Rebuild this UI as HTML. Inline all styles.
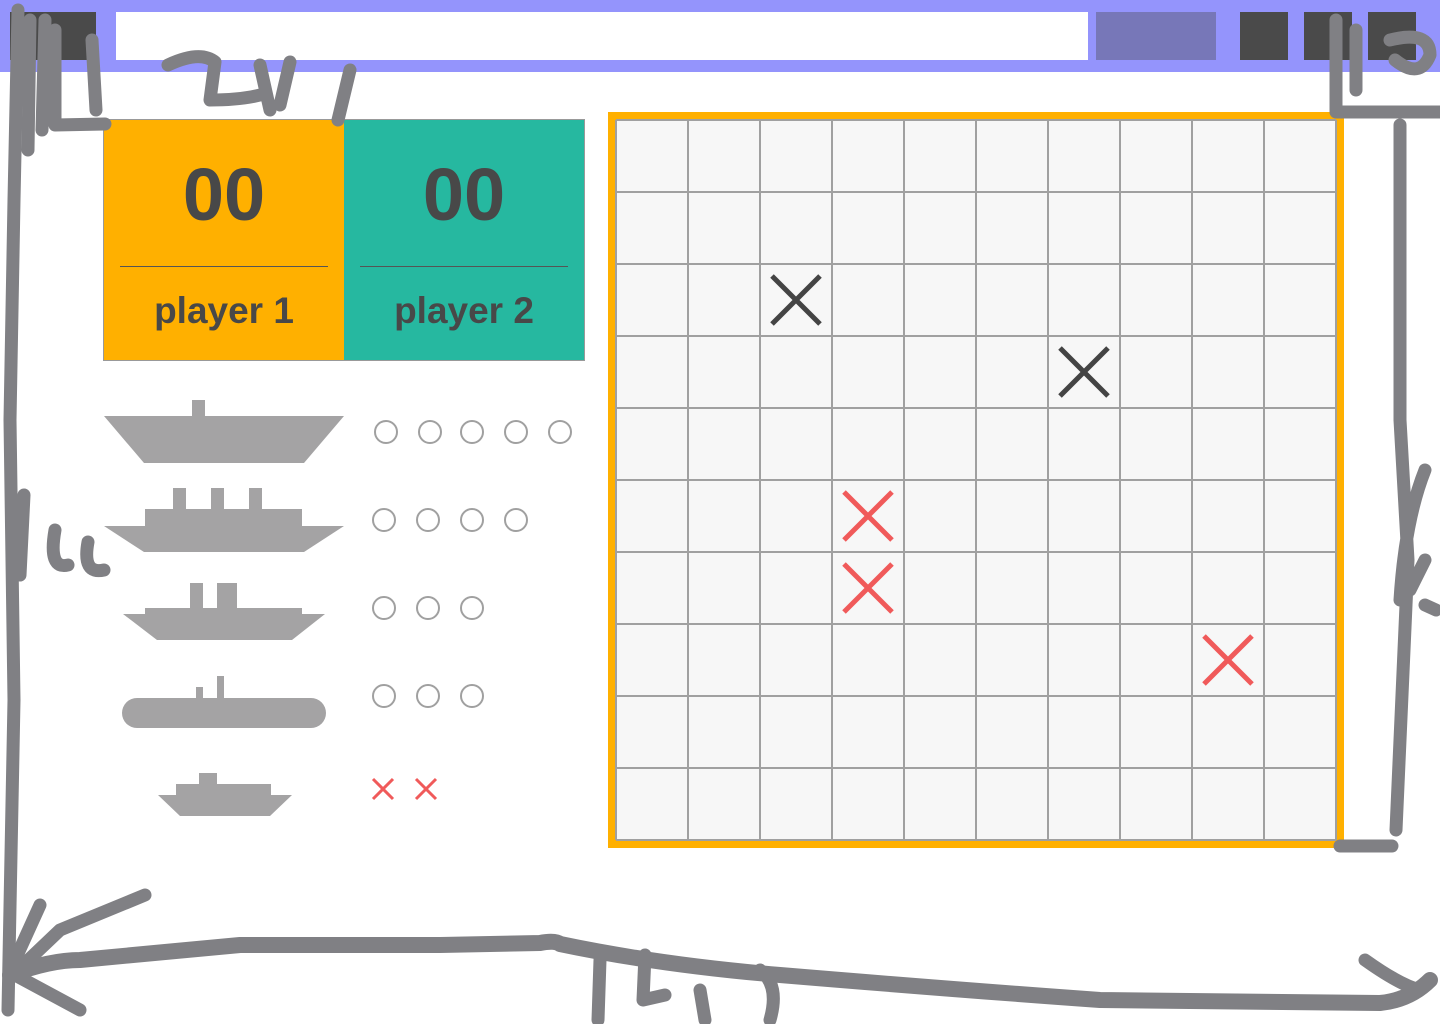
<!DOCTYPE html>
<html><head><meta charset="utf-8"><style>
*{margin:0;padding:0;box-sizing:border-box}
body{width:1440px;height:1024px;background:#fff;position:relative;overflow:hidden;font-family:"Liberation Sans",sans-serif}
.a{position:absolute}
</style></head><body>
<div class="a" style="left:0;top:0;width:1440px;height:72px;background:#9494fc"></div>
<div class="a" style="left:10px;top:12px;width:86px;height:48px;background:#4a4a4a"></div>
<div class="a" style="left:116px;top:12px;width:972px;height:48px;background:#fff"></div>
<div class="a" style="left:1096px;top:12px;width:120px;height:48px;background:#7777b8"></div>
<div class="a" style="left:1240px;top:12px;width:48px;height:48px;background:#4a4a4a"></div>
<div class="a" style="left:1304px;top:12px;width:48px;height:48px;background:#4a4a4a"></div>
<div class="a" style="left:1368px;top:12px;width:48px;height:48px;background:#4a4a4a"></div>

<div class="a" style="left:103px;top:119px;width:482px;height:242px;border:1px solid #999"></div>
<div class="a" style="left:104px;top:120px;width:240px;height:240px;background:#ffb000"></div>
<div class="a" style="left:344px;top:120px;width:240px;height:240px;background:#26b8a0"></div>
<div class="a" style="left:120px;top:266px;width:208px;height:1px;background:#555"></div>
<div class="a" style="left:360px;top:266px;width:208px;height:1px;background:#555"></div>
<div class="a" style="left:104px;top:152px;width:240px;text-align:center;font-size:74px;font-weight:bold;color:#484848;line-height:86px">00</div>
<div class="a" style="left:344px;top:152px;width:240px;text-align:center;font-size:74px;font-weight:bold;color:#484848;line-height:86px">00</div>
<div class="a" style="left:104px;top:289px;width:240px;text-align:center;font-size:37px;font-weight:bold;color:#484848;line-height:44px">player 1</div>
<div class="a" style="left:344px;top:289px;width:240px;text-align:center;font-size:37px;font-weight:bold;color:#484848;line-height:44px">player 2</div>

<svg class="a" style="left:0;top:0" width="1440" height="1024">
<g fill="#a4a3a4">
<rect x="192" y="400" width="13" height="17"/><polygon points="104,416 344,416 304,463 144,463"/>
<rect x="173" y="488" width="13" height="22"/><rect x="211" y="488" width="13" height="22"/><rect x="249" y="488" width="13" height="22"/>
<rect x="145" y="509" width="157" height="18"/><polygon points="104,526 344,526 304,552 144,552"/>
<rect x="190" y="583" width="13" height="26"/><rect x="217" y="583" width="20" height="26"/>
<rect x="145" y="608" width="157" height="7"/><polygon points="123,614 325,614 292,640 157,640"/>
<rect x="196" y="687" width="7" height="12"/><rect x="217" y="676" width="7" height="23"/>
<rect x="122" y="698" width="204" height="30" rx="15"/>
<rect x="199" y="773" width="18" height="12"/><rect x="176" y="784" width="95" height="12"/>
<polygon points="158,795 292,795 270,816 180,816"/>
</g>
<g fill="none" stroke="#a0a0a0" stroke-width="2">
<circle cx="386" cy="432" r="11"/><circle cx="430" cy="432" r="11"/><circle cx="472" cy="432" r="11"/><circle cx="516" cy="432" r="11"/><circle cx="560" cy="432" r="11"/>
<circle cx="384" cy="520" r="11"/><circle cx="428" cy="520" r="11"/><circle cx="472" cy="520" r="11"/><circle cx="516" cy="520" r="11"/>
<circle cx="384" cy="608" r="11"/><circle cx="428" cy="608" r="11"/><circle cx="472" cy="608" r="11"/>
<circle cx="384" cy="696" r="11"/><circle cx="428" cy="696" r="11"/><circle cx="472" cy="696" r="11"/>
</g>
<g stroke="#f05a5a" stroke-width="3"><path d="M373 779l20 20M393 779l-20 20M416 779l20 20M436 779l-20 20"/></g>

<rect x="612" y="116" width="728" height="728" fill="#f7f7f7" stroke="#ffb000" stroke-width="8"/>
<g stroke="#a0a0a0" stroke-width="2">
<path d="M616 120H1336M616 192H1336M616 264H1336M616 336H1336M616 408H1336M616 480H1336M616 552H1336M616 624H1336M616 696H1336M616 768H1336M616 840H1336"/>
<path d="M616 120V840M688 120V840M760 120V840M832 120V840M904 120V840M976 120V840M1048 120V840M1120 120V840M1192 120V840M1264 120V840M1336 120V840"/>
</g>
<g stroke="#444" stroke-width="5"><path d="M772 276l48 48M820 276l-48 48M1060 348l48 48M1108 348l-48 48"/></g>
<g stroke="#f05a5a" stroke-width="5"><path d="M844 492l48 48M892 492l-48 48M844 564l48 48M892 564l-48 48M1204 636l48 48M1252 636l-48 48"/></g>

<g fill="none" stroke="#808084" stroke-width="13" stroke-linecap="round" stroke-linejoin="round">
<path d="M18 10L14 200L10 420L14 700L8 1010"/>
<path d="M30 20L28 150M45 20L42 130M55 30V125L105 124M92 40L96 110"/>
<path d="M168 65Q200 50 215 62L210 100Q240 100 260 95M260 65L270 110M290 62L280 105M350 70L338 120"/>
<path d="M24 495L20 575M55 530Q48 570 68 565M88 542Q82 575 104 570"/>
<path d="M15 960L40 905M20 968L60 930L145 895M15 975L80 1010M1365 960Q1400 985 1420 990"/>
<path d="M600 960L598 1020M645 955L643 1000L665 995M700 990L705 1020M760 970Q780 985 770 1020"/>
<path d="M1336 20V112H1440M1400 125V420L1408 560L1396 830M1340 846H1392M1356 30V90M1390 40Q1430 30 1430 55Q1420 80 1395 60M1425 470Q1405 520 1400 600M1425 560L1410 590M1425 605L1436 610"/>
</g>
<path fill="none" stroke="#808084" stroke-width="16" stroke-linecap="round" stroke-linejoin="round" d="M10 975Q50 960 80 960L240 945L440 945L540 943Q555 940 560 944Q660 965 780 975Q960 990 1100 1000L1380 1003Q1410 1000 1430 980"/>
</svg>
</body></html>
